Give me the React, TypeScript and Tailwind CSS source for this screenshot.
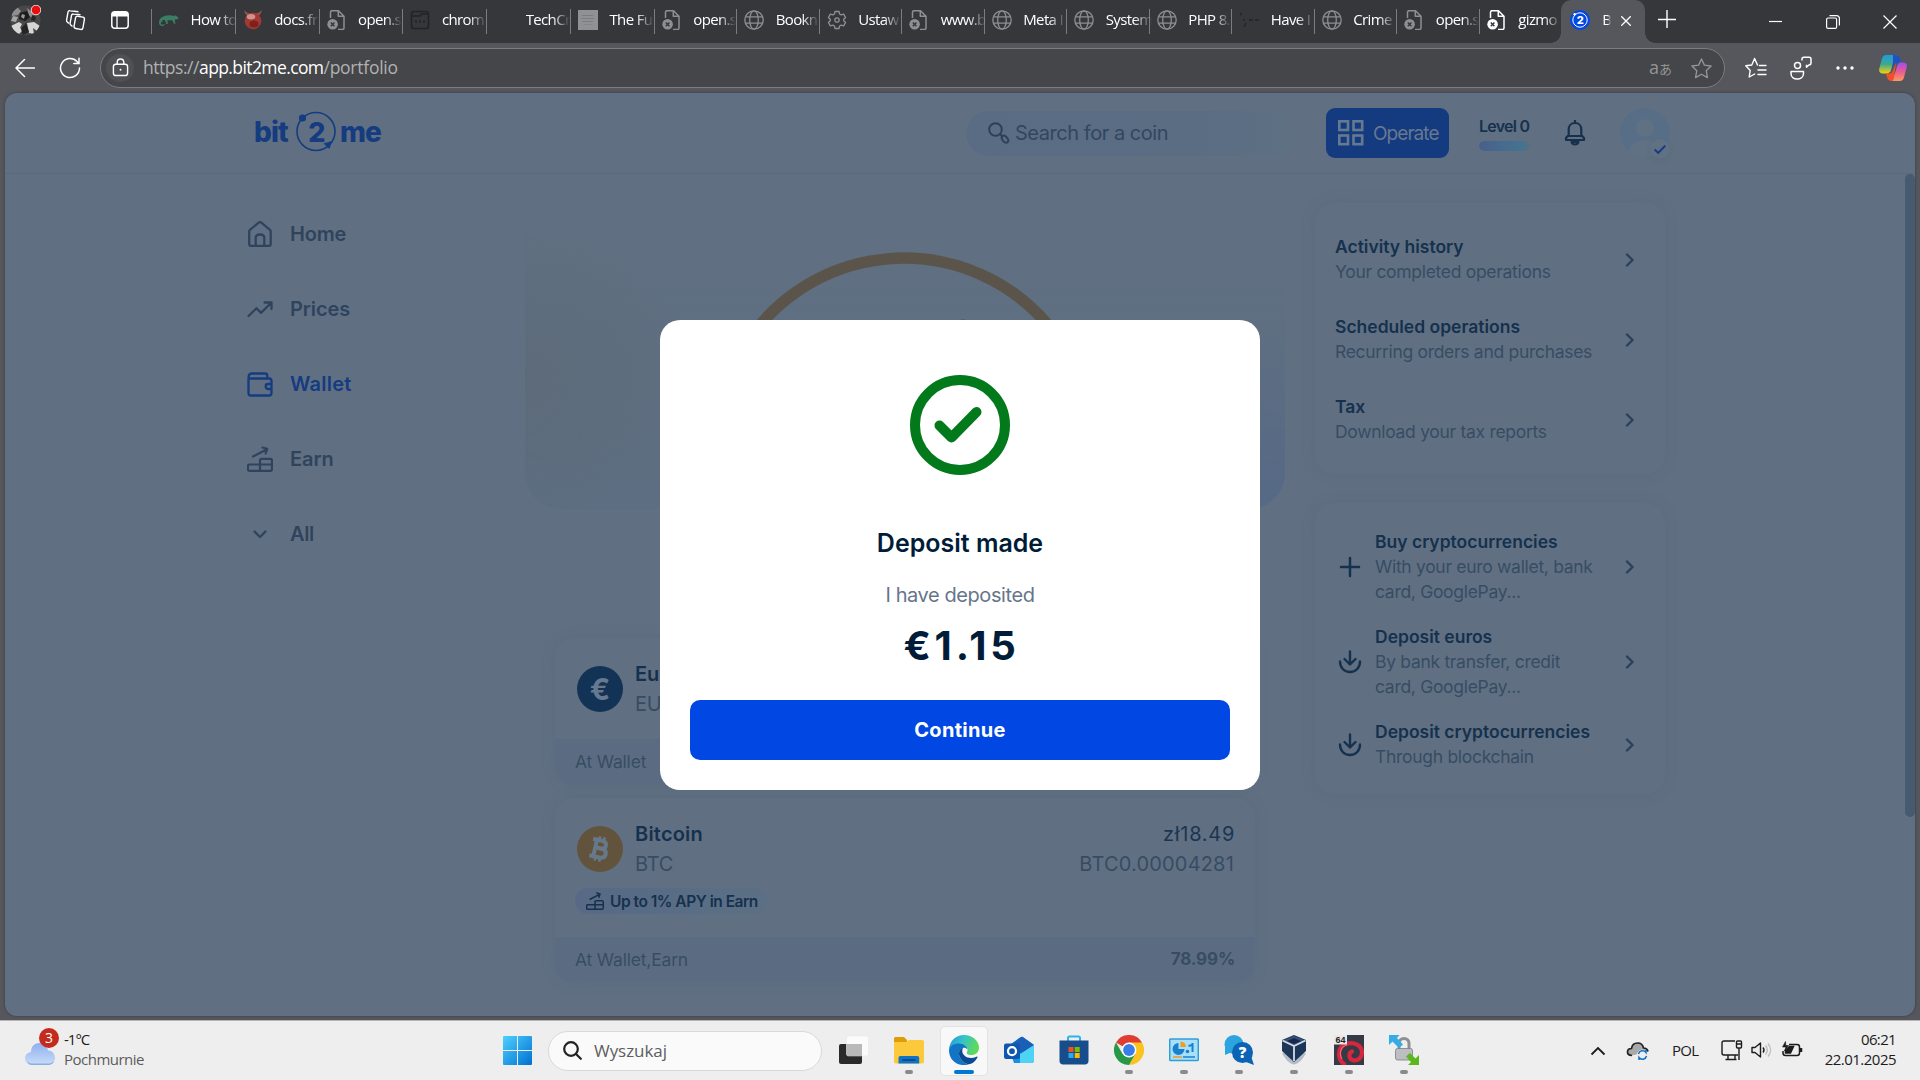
import type { ReactNode } from "react";

const INK = "#16314d";
const MUTED = "#374c63";
const BRAND = "#153b80";

/* ---------- Browser tab icons ---------- */

function DeadPage({ color = "#8e8f92" }: { color?: string }) {
  return (
    <svg viewBox="0 0 20 20" className="h-5 w-5" fill="none">
      <path d="M3.5 8V2.2c0-.9.6-1.5 1.5-1.5h6.500L17 6.200V18c0 .8-.6 1.400-1.400 1.400H11M11.300 1v5.300H17" stroke={color} strokeWidth="1.5" strokeLinejoin="round" />
      <circle cx="5.6" cy="14.3" r="5.3" fill={color} />
      <path d="m3.8 12.4 3.6 3.8m0-3.8-3.6 3.8" stroke="#36373b" strokeWidth="1.4" />
    </svg>
  );
}

function Globe() {
  return (
    <svg viewBox="0 0 20 20" className="h-5 w-5" fill="none" stroke="#8e8f92" strokeWidth="1.3">
      <circle cx="10" cy="10" r="9.2" />
      <ellipse cx="10" cy="10" rx="4.3" ry="9.2" />
      <path d="M1.6 6.8h16.8M1.6 13.2h16.8" />
    </svg>
  );
}

function Gear() {
  return (
    <svg viewBox="0 0 24 24" className="h-[22px] w-[22px]" fill="none" stroke="#8e8f92" strokeWidth="1.6" strokeLinejoin="round">
      <path d="M9.6 1.8h4.8l.7 3 1.9 1.1 3-.9 2.3 4-2.2 2.1v1.8l2.2 2.1-2.3 4-3-.9-1.9 1.1-.7 3H9.600l-.7-3L7 18.100l-3 .9-2.300-4 2.200-2.100v-1.800L1.700 9l2.300-4 3 .9 1.900-1.100z" />
      <circle cx="12" cy="12" r="2.600" />
    </svg>
  );
}

function Chameleon() {
  return (
    <svg viewBox="0 0 20 20" className="h-5 w-5" fill="none">
      <path d="M5.200 14.200a2.200 2.200 0 1 1-1.700-3.200" stroke="#3b7d62" strokeWidth="1.300" />
      <path d="M4.600 15.200C1.500 16.500-.3 14 .1 11.500.5 8.500 2.500 6.800 5 6.200 8 5.200 12 5 14.500 6c1.500-1.300 3 0 3 0l2.200 1.900c-.5 1.600-2.700 1.800-4.200 1.600l1 4-1.500.2-1.700-3.400H8.500l.3 3.600-1.600.1L6 10.200c-2-.7-4.300.3-4.300 2.500 0 1.500 1.300 2.600 2.900 2.500z" fill="#3b7d62" />
    </svg>
  );
}

function Daemon() {
  return (
    <svg viewBox="0 0 20 20" className="h-5 w-5">
      <path d="M1.500 0c0 3 1 5 4.500 6l2-2.500C5 3.500 3 2.500 1.500 0zM18.500 0c0 3-1 5-4.500 6l-2-2.500c3 0 5-1 6.500-3.500z" fill="#a0504c" />
      <circle cx="10" cy="11" r="8.300" fill="#a23a33" />
      <ellipse cx="8" cy="6.700" rx="4.300" ry="2.700" fill="#cf928d" />
      <ellipse cx="11" cy="14" rx="4.500" ry="3.500" fill="#7e211b" />
    </svg>
  );
}

function DarkWindow() {
  return (
    <svg viewBox="0 0 20 20" className="h-5 w-5" fill="none" stroke="#222327" strokeWidth="1.600">
      <rect x="1.500" y="1.500" width="17" height="17" rx="2.500" />
      <path d="M2 6h8l1.500-2H18" />
      <path d="M5 11.500h2m2 0h2m2 0h2" strokeWidth="2" />
    </svg>
  );
}

function GreySquare() {
  return (
    <div className="flex h-5 w-5 flex-col items-center justify-center gap-[2px] bg-[#909193]">
      <div className="h-px w-[11px] bg-[#7b7c7e]" />
      <div className="h-px w-[13px] bg-[#7b7c7e]" />
      <div className="h-px w-[11px] bg-[#7b7c7e]" />
      <div className="h-px w-[8px] bg-[#7b8792]" />
    </div>
  );
}

function FaintMark() {
  return (
    <svg viewBox="0 0 20 20" className="h-5 w-5" stroke="#242529" strokeWidth="1.500">
      <path d="M1 3l1.500 2M5 9v2M7 13l-2 4M10 10h4M16 10h4" />
    </svg>
  );
}

function Bit2MeMark() {
  return (
    <svg viewBox="0 0 20 20" className="h-5 w-5">
      <circle cx="10" cy="10" r="10" fill="#0147e4" />
      <circle cx="10" cy="10" r="7.200" fill="none" stroke="#fff" strokeWidth="1" />
      <circle cx="4.700" cy="4.300" r="1.300" fill="#fff" />
      <text x="10" y="14" textAnchor="middle" fontFamily="Inter" fontWeight="800" fontSize="11" fill="#fff">2</text>
    </svg>
  );
}

const tabs: { icon: ReactNode; title: string }[] = [
  { icon: <Chameleon />, title: "How to" },
  { icon: <Daemon />, title: "docs.fr" },
  { icon: <DeadPage />, title: "open.s" },
  { icon: <DarkWindow />, title: "chrom" },
  { icon: null, title: "TechCr" },
  { icon: <GreySquare />, title: "The Fu" },
  { icon: <DeadPage />, title: "open.s" },
  { icon: <Globe />, title: "Bookn" },
  { icon: <Gear />, title: "Ustaw" },
  { icon: <DeadPage />, title: "www.b" },
  { icon: <Globe />, title: "Meta I" },
  { icon: <Globe />, title: "System" },
  { icon: <Globe />, title: "PHP 8." },
  { icon: <FaintMark />, title: "Have I" },
  { icon: <Globe />, title: "Crime" },
  { icon: <DeadPage />, title: "open.s" },
  { icon: <DeadPage color="#ffffff" />, title: "gizmo" },
];

function TabStrip() {
  return (
    <div className="flex h-[43px] bg-[#36373b] text-[15px] tracking-[-0.65px] text-white">
      <div className="flex w-[151px] shrink-0 items-start pt-[5px] pl-[10px]">
        <svg viewBox="0 0 31 31" className="h-[31px] w-[31px]">
          <clipPath id="face"><circle cx="15.500" cy="15.500" r="15" /></clipPath>
          <g clipPath="url(#face)">
            <rect width="31" height="31" fill="#484848" />
            <path d="M2 6l5-4 4 4-3 4-6 1zM17 3l6 5 1 6-5-3z" fill="#8f8f8f" />
            <path d="M10 8l7-2 3 6-5 4-6-2z" fill="#1c1c1c" />
            <path d="M12 9l3 1-1 4-3-2z" fill="#9a9a9a" />
            <path d="M1 21l8-4 3 2-2 4 3 2-4 4-8-2zM17 18l7-1 6 4-3 5-4-3 1 6-5-1-1-5z" fill="#d6d6d6" />
            <path d="M11 24l5-6 3 9-6 3zM22 10l4 2-1 4-4-1z" fill="#242424" />
            <path d="M3 11l5 1-2 5-5-1z" fill="#a5a5a5" />
          </g>
          <circle cx="26" cy="5" r="4.800" fill="#e60f0f" stroke="#fff" strokeWidth=".8" />
        </svg>
        <svg viewBox="0 0 22 22" className="mt-[4px] ml-[24px] h-[22px] w-[22px]" fill="none" stroke="#fff" strokeWidth="1.400" strokeLinejoin="round">
          <rect x="9.700" y="7.500" width="9" height="12.500" rx="2" transform="rotate(10 14 14)" />
          <path d="M7.500 17.500 5.800 16c-.7-.6-.9-1-.7-1.900L6.500 6.500c.2-1 .9-1.700 2-1.500l7 .8" />
          <path d="M4 14.500 2.300 13c-.7-.6-.9-1-.7-1.900l1.400-8c.2-1 .9-1.600 2-1.400l8.500 1.100" />
        </svg>
        <svg viewBox="0 0 18 18" className="mt-[6px] ml-[24px] h-[18px] w-[18px]">
          <rect x=".8" y=".8" width="16.400" height="16.400" rx="3" fill="none" stroke="#fff" strokeWidth="1.500" />
          <path d="M1 5.500V4c0-2 1.300-3 3-3h10c1.700 0 3 1 3 3v1.500z" fill="#fff" />
          <path d="M6 5v12" stroke="#fff" strokeWidth="1.300" />
        </svg>
      </div>
      {tabs.map((t, i) => (
        <div key={i} className={i < 6 ? "flex h-[38px] w-[83.8px] shrink-0 items-center" : "flex h-[38px] w-[82.5px] shrink-0 items-center"}>
          <div className="mt-[5px] h-[25px] w-px shrink-0 bg-[#7b7c7f]" />
          <div className="mt-px ml-[7px] flex h-5 w-5 shrink-0 items-center justify-center">{t.icon}</div>
          <div className="ml-[11.5px] flex-1 whitespace-nowrap [mask-image:linear-gradient(to_right,black_60%,transparent)]">{t.title}</div>
        </div>
      ))}
      <div className="relative flex h-[43px] w-[84px] shrink-0 items-center rounded-t-[10px] bg-[#56575c] pb-[4px] pl-[9px]">
        <div className="absolute bottom-0 left-[-10px] h-[10px] w-[10px] bg-[radial-gradient(circle_at_0_0,#36373b_9.500px,#56575c_10px)]" />
        <div className="absolute right-[-10px] bottom-0 h-[10px] w-[10px] bg-[radial-gradient(circle_at_100%_0,#36373b_9.500px,#56575c_10px)]" />
        <Bit2MeMark />
        <div className="ml-[12px] w-[9px] [mask-image:linear-gradient(to_right,black_60%,transparent)]">B</div>
        <svg viewBox="0 0 10 10" className="mt-[2px] ml-[10px] h-[10px] w-[10px]" stroke="#fff" strokeWidth="1.300"><path d="M.3.3l9.400 9.400M9.700.3.3 9.700" /></svg>
      </div>
      <svg viewBox="0 0 18 18" className="mt-[10px] ml-[13px] h-[18px] w-[18px] shrink-0" stroke="#fff" strokeWidth="1.400"><path d="M9 0v18M0 9.500h18" /></svg>
      <div className="ml-[93px] flex items-start gap-[43px] pt-[15px]">
        <svg viewBox="0 0 14 14" className="h-[14px] w-[14px]" stroke="#fff" strokeWidth="1.200"><path d="M0 6.500h13" /></svg>
        <svg viewBox="0 0 14 14" className="h-[14px] w-[14px]" fill="none" stroke="#fff" strokeWidth="1.200"><rect x=".6" y="3" width="10" height="10.400" rx="1.500" /><path d="M3.500.6h6.900c1.900 0 3 1 3 3v7" /></svg>
        <svg viewBox="0 0 14 14" className="h-[14px] w-[14px]" stroke="#fff" strokeWidth="1.200"><path d="M.5.5l13 13M13.500.5l-13 13" /></svg>
      </div>
    </div>
  );
}

function Toolbar() {
  return (
    <div className="flex h-[50px] items-center bg-[#56575c]">
      <svg viewBox="0 0 20 20" className="ml-[15px] h-5 w-5" fill="none" stroke="#fff" strokeWidth="1.500" strokeLinecap="round"><path d="M9.500 1.500 1 10l8.500 8.500M1 10h18.500" /></svg>
      <svg viewBox="0 0 22 22" className="ml-[24px] h-[22px] w-[22px]" fill="none" stroke="#fff" strokeWidth="1.500" strokeLinecap="round"><path d="M20.500 11A9.500 9.500 0 1 1 18 4.600L20 6.500M20 1.300v5.200h-5.200" /></svg>
      <div className="ml-[19px] flex h-[40px] w-[1625px] items-center rounded-full border border-[#7c7d80] bg-[#454649] pr-[11px] pl-[5px]">
        <div className="flex h-[28px] w-[28px] items-center justify-center rounded-full bg-[#4f5053]">
          <svg viewBox="0 0 18 20" className="mb-[2px] h-[19px] w-[17px]" fill="none" stroke="#fff" strokeWidth="1.500"><rect x="1.500" y="6.500" width="15" height="12" rx="2.500" /><path d="M5.500 6.500V4.800C5.500 2.500 7 1 9 1s3.500 1.500 3.500 3.800v1.700" /><circle cx="9" cy="12.400" r="1" fill="#fff" stroke="none" /></svg>
        </div>
        <div className="ml-[9px] flex-1 pb-[1px] text-[17.5px] whitespace-nowrap text-[#b0b1b3]">
          <span className="tracking-[-0.46px]">https://</span>
          <span className="tracking-[-0.6px] text-white">app.bit2me.com</span>
          <span className="tracking-[-0.25px]">/portfolio</span>
        </div>
        <div className="mr-[18px] flex items-baseline pb-[2px] text-[#949598]">
          <span className="text-[18px]">a</span>
          <span className="font-['Noto_Sans_CJK_JP',sans-serif] text-[13px]">あ</span>
        </div>
        <svg viewBox="0 0 24 24" className="h-[23px] w-[23px]" fill="none" stroke="#949598" strokeWidth="1.400" strokeLinejoin="round"><path d="m12 2 3 6.500 7 .9-5.100 4.900 1.300 7.200L12 18l-6.200 3.500 1.300-7.200L2 9.400l7-.9z" /></svg>
      </div>
      <svg viewBox="0 0 22 22" className="ml-[20px] h-[22px] w-[22px]" fill="none" stroke="#fff" strokeWidth="1.400" strokeLinejoin="round" strokeLinecap="round"><path d="M12.500 8 9.600 1.500 6.800 8l-6 .8L5.200 13.500l-1 6.500 5.500-3M14.500 8.500h6.500M13 13h8M13 17.500h8" /></svg>
      <svg viewBox="0 0 22 24" className="ml-[23px] h-[24px] w-[22px]" fill="none" stroke="#fff" strokeWidth="1.500" strokeLinejoin="round"><circle cx="7.500" cy="9.500" r="3" /><path d="M1 15.500h12.500v2c0 3.500-3 5.500-6.300 5.500S1 21 1 17.500zM12 4.500V3c0-1 .7-1.800 1.800-1.800h5.400c1.100 0 1.800.8 1.800 1.800v4c0 1-.7 1.800-1.800 1.800l-2.700 2.400V8.800" /></svg>
      <svg viewBox="0 0 18 4" className="ml-[24px] h-[4px] w-[18px]" fill="#fff"><circle cx="2" cy="2" r="1.700" /><circle cx="9" cy="2" r="1.700" /><circle cx="16" cy="2" r="1.700" /></svg>
      <svg viewBox="0 0 28 26" className="ml-[25px] h-[26px] w-[28px]">
        <defs>
          <linearGradient id="cpA" x1="0" y1="0" x2="0" y2="1"><stop offset="0" stopColor="#1a9be8" /><stop offset=".5" stopColor="#3fa98c" /><stop offset="1" stopColor="#f5d20c" /></linearGradient>
          <linearGradient id="cpB" x1="0" y1="0" x2="0" y2="1"><stop offset="0" stopColor="#a04df0" /><stop offset=".5" stopColor="#ea5a94" /><stop offset="1" stopColor="#ff9a5c" /></linearGradient>
        </defs>
        <path d="M7 0h11l-1.500 1.500L11.500 16.500 9 18.500H4c-3 0-4.500-2-3.700-5L3 3.500C3.600 1.300 5 0 7 0z" fill="url(#cpA)" />
        <path d="M14 0h2c3 0 4 1 5 4l1 4h-4.500c-1.700 0-2.700 1-3.200 2.500L12 17l2-10z" fill="#1c52c8" />
        <path d="M21 26h-8l3.500-9.500L18.500 10l2-2.500H24c3 0 4.500 1.500 3.700 4.500L25 22.500c-.6 2.200-2 3.500-4 3.500z" fill="url(#cpB)" />
        <path d="M7 18.500h3.500c1.500 0 2.400-.7 3-2.200L17 8l-2.500 17-1.500 1c-3 0-4-1-5-4z" fill="#f0512c" />
      </svg>
    </div>
  );
}

/* ---------- Page ---------- */

function EarnIcon({ className }: { className: string }) {
  return (
    <svg viewBox="0 0 26 26" className={className} fill="none" stroke="currentColor" strokeWidth="2.200" strokeLinejoin="round" strokeLinecap="round">
      <path d="M6 10.500 19.500 3.500M15.500 1.500l4.700 1.300-1.500 4.700" />
      <path d="M13 18v-3.700c0-1 .5-1.500 1.500-1.500h9c1 0 1.400.5 1.400 1.500v9c0 1-.5 1.500-1.500 1.500h-21c-1 0-1.500-.5-1.500-1.500V20c0-1 .5-1.500 1.500-1.500h22.500M13 18v7" />
    </svg>
  );
}

function SiteHeader() {
  return (
    <header className="flex h-[81px] shrink-0 items-center border-b border-[#586a80] pl-[249px]">
      <div className="flex items-center pb-[2px] text-[28px] font-extrabold tracking-[-0.9px] text-[#153b80]">
        <span className="w-[40px]">bit</span>
        <svg viewBox="0 0 44 44" className="h-[44px] w-[44px] shrink-0">
          <circle cx="22" cy="21.500" r="19" fill="none" stroke={BRAND} strokeWidth="1.600" />
          <circle cx="8.500" cy="8" r="3.600" fill={BRAND} />
          <path d="M29.500 33.500l8.500-2.500-2.500 8z" fill={BRAND} />
          <text x="22.500" y="32" textAnchor="middle" fontFamily="Inter" fontWeight="800" fontSize="27" fill={BRAND}>2</text>
        </svg>
        <span className="w-[46px] pl-[2px]">me</span>
      </div>
      <div className="ml-[582px] flex h-[45px] w-[330px] shrink-0 items-center rounded-full bg-[linear-gradient(90deg,#5a6c84,#5b6d83_70%,#5e7082)] pl-[22px]">
        <svg viewBox="0 0 22 22" className="h-[22px] w-[22px]" fill="none" stroke="#2c4159" strokeWidth="2"><circle cx="7.500" cy="7.500" r="6.300" /><path d="m12 12 2 2" /><ellipse cx="17" cy="17.200" rx="4" ry="2.500" transform="rotate(50 17 17.200)" /></svg>
        <span className="ml-[5px] text-[20px] tracking-[-0.46px] text-[#31465f]">Search for a coin</span>
      </div>
      <div className="ml-[30px] flex h-[50px] w-[123px] shrink-0 items-center rounded-[9px] bg-[#143a7f] pl-[12px]">
        <svg viewBox="0 0 26 26" className="h-[26px] w-[26px]" fill="none" stroke="#66798f" strokeWidth="2.600"><rect x="1.300" y="1.300" width="8.700" height="8.700" /><rect x="15.500" y="1.300" width="8.700" height="8.700" /><rect x="1.300" y="15.500" width="8.700" height="8.700" /><rect x="15.500" y="15.500" width="8.700" height="8.700" /></svg>
        <span className="mt-[2px] ml-[9px] text-[19px] tracking-[-0.95px] text-[#667890]">Operate</span>
      </div>
      <div className="ml-[30px] flex w-[56px] shrink-0 flex-col">
        <span className="text-[16px] leading-5 font-semibold tracking-[-0.75px] whitespace-nowrap text-[#16314d]">Level 0</span>
        <div className="mt-[5px] h-[10px] w-[51px] overflow-hidden rounded-full bg-[#567083]">
          <div className="h-full w-[47px] rounded-full bg-[linear-gradient(90deg,#48608c,#447590)]" />
        </div>
      </div>
      <svg viewBox="0 0 22 26" className="ml-[29px] h-[26px] w-[22px] shrink-0" fill="none" stroke={INK} strokeWidth="2.200" strokeLinejoin="round"><path d="M11 0v3M11 3c-4 0-6.300 3-6.300 6.500v5.500L2 18v2h18v-2l-2.700-3V9.500C17.300 6 15 3 11 3zM4.500 16h13M7.500 22c.5 1.600 1.800 2.500 3.500 2.500s3-.9 3.500-2.500z" /></svg>
      <div className="relative ml-[34px] h-[50px] w-[50px] shrink-0">
        <svg viewBox="0 0 50 50" className="h-[50px] w-[50px]">
          <clipPath id="user"><circle cx="25" cy="25" r="25" /></clipPath>
          <g clipPath="url(#user)"><rect width="50" height="50" fill="#586e86" /><circle cx="25" cy="20" r="9" fill="#607184" /><ellipse cx="25" cy="48" rx="18" ry="16" fill="#607184" /></g>
        </svg>
        <div className="absolute top-[31px] left-[30px] flex h-5 w-5 items-center justify-center rounded-full bg-[#607184] shadow-[0_2px_4px_rgba(70,90,115,0.25)]">
          <svg viewBox="0 0 12 9" className="h-[9px] w-[12px]" fill="none" stroke={BRAND} strokeWidth="1.900"><path d="m.7 4.500 3.500 3.500L11.300.7" /></svg>
        </div>
      </div>
    </header>
  );
}

const nav: { label: string; cls: string; icon: ReactNode }[] = [
  { label: "Home", cls: "tracking-[-0.2px] text-[#2f445c]", icon: <path d="M2.200 10.500c0-.6.200-1.200.7-1.600L12 1.400c.6-.5 1.400-.5 2 0l9 7.500c.5.400.7 1 .7 1.600v12.600c0 1.200-.7 1.900-1.900 1.900H4.100c-1.200 0-1.900-.7-1.900-1.900zM8.700 25v-8c0-2.300 1.700-3.500 4.300-3.500s4.300 1.200 4.300 3.500v8" /> },
  { label: "Prices", cls: "tracking-[-0.1px] text-[#2f445c]", icon: <path d="m1.500 20 8-7.800 4.500 4.700L24 7M17.500 6.500H24.500V13" /> },
  { label: "Wallet", cls: "tracking-[0.25px] text-[#153b80]", icon: <path d="M1.500 7.500V22c0 1.600.8 2.500 2.500 2.500h18c1.700 0 2.500-.9 2.500-2.500V10c0-1.600-.8-2.500-2.500-2.500zc0-3.500 1-5 3-5h13.500c1.500 0 2.300.8 2.300 2.300v2.500M24.500 13h-3.300c-1.500 0-2.500 1-2.500 2.300s1 2.700 2.500 2.700h3.300" /> },
  { label: "Earn", cls: "tracking-[-0.1px] text-[#2f445c]", icon: null },
  { label: "All", cls: "tracking-[-0.4px] text-[#2f445c]", icon: <path d="m7.500 10.500 5.500 5.500 5.500-5.500" /> },
];

function Sidebar() {
  return (
    <nav className="flex w-[520px] shrink-0 flex-col pt-[22px] pl-[242px]">
      {nav.map((n) => (
        <div key={n.label} className={`flex h-[75px] items-center gap-[17px] text-[20px] font-semibold ${n.cls}`}>
          {n.icon ? (
            <svg viewBox="0 0 26 26" className="h-[26px] w-[26px]" fill="none" stroke="currentColor" strokeWidth="2.300" strokeLinecap="round" strokeLinejoin="round">{n.icon}</svg>
          ) : (
            <EarnIcon className="h-[26px] w-[26px]" />
          )}
          {n.label}
        </div>
      ))}
    </nav>
  );
}

function Portfolio() {
  return (
    <main className="w-[760px] shrink-0">
      <div className="mt-[26px] flex h-[309px] justify-center rounded-b-[36px] bg-[radial-gradient(ellipse_180px_150px_at_0%_58%,#5d6b79,transparent),radial-gradient(ellipse_280px_190px_at_100%_100%,#566985,transparent),linear-gradient(180deg,transparent_20%,#5d6e82_100%)] pt-[48px]">
        <svg viewBox="703 246 404 90" className="h-[90px] w-[404px]" fill="none">
          <path d="M741 350A188.500 188.500 0 0 1 1048 323" stroke="#5b544b" strokeWidth="11.500" strokeLinecap="round" />
          <ellipse cx="963" cy="320" rx="4" ry="2.500" fill="#4c4f68" />
        </svg>
      </div>
      <div className="mx-[30px] mt-[129px] flex flex-col gap-[13px]">
        <section className="overflow-hidden rounded-[20px] shadow-[0_0_14px_rgba(70,90,115,0.18)]">
          <div className="flex h-[101px] items-start pt-[21px] pl-[22px]">
            <div className="mt-[7px] flex h-[46px] w-[46px] items-center justify-center rounded-full bg-[#123355] text-[30px] leading-none font-bold text-[#66798e]">€</div>
            <div className="ml-[12px] text-[20px] leading-[30px]">
              <div className="font-semibold text-[#16314d]">Euro</div>
              <div className="tracking-[-0.29px] text-[#374c63]">EUR</div>
            </div>
          </div>
          <div className="flex h-[46px] items-center bg-[#5b6c82] px-[20px] text-[17.5px] tracking-[-0.2px] text-[#374c63]">At Wallet</div>
        </section>
        <section className="overflow-hidden rounded-[20px] shadow-[0_0_14px_rgba(70,90,115,0.18)]">
          <div className="flex h-[139px] flex-col pt-[21px]">
            <div className="flex items-start pr-[20px] pl-[22px]">
              <svg viewBox="0 0 46 46" className="mt-[7px] h-[46px] w-[46px]">
                <circle cx="23" cy="23" r="23" fill="#62543c" />
                <g transform="rotate(13 23 23)" stroke="#66788a" fill="none" strokeWidth="4">
                  <path d="M14 14.500h9c3.500 0 5 1.600 5 4 0 2.500-1.700 4-5 4h-5M14 31.500h10c4 0 5.700-1.700 5.700-4.600 0-3-2-4.700-5.700-4.700h-5.500M18 14.500v17" />
                  <path d="M20.300 10.500v4M25 10.500v4M20.300 31.500v4M25 31.500v4" strokeWidth="2.600" />
                </g>
              </svg>
              <div className="ml-[12px] text-[20px] leading-[30px]">
                <div className="font-semibold tracking-[0.2px] text-[#16314d]">Bitcoin</div>
                <div className="tracking-[-0.29px] text-[#374c63]">BTC</div>
              </div>
              <div className="ml-auto text-right text-[20px] leading-[30px]">
                <div className="tracking-[0.7px] text-[#1b3651]">zł18.49</div>
                <div className="pr-px tracking-[0.18px] text-[#374c63]">BTC0.00004281</div>
              </div>
            </div>
            <div className="mt-[9px] ml-[20px] flex h-[26px] w-[193px] items-center rounded-full bg-[linear-gradient(90deg,#576986,#5b7084)] pl-[11px] text-[#16314d]">
              <EarnIcon className="h-[18px] w-[18px]" />
              <span className="mt-px ml-[6px] text-[15.5px] font-semibold tracking-[-0.48px] whitespace-nowrap">Up to 1% APY in Earn</span>
            </div>
          </div>
          <div className="flex h-[46px] items-center justify-between bg-[#5b6c82] px-[20px] text-[17.5px] tracking-[-0.18px] text-[#374c63]">
            <span>At Wallet,Earn</span>
            <span className="text-[17px] font-bold tracking-[-0.15px]">78.99%</span>
          </div>
        </section>
      </div>
    </main>
  );
}

function Chevron() {
  return (
    <svg viewBox="0 0 10 14" className="mt-px h-[14px] w-[10px] shrink-0" fill="none" stroke="#2c4159" strokeWidth="2.400" strokeLinecap="round" strokeLinejoin="round"><path d="m2 1.500 5.500 5.500L2 12.500" /></svg>
  );
}

function Row({ icon, title, lines }: { icon?: ReactNode; title: string; lines: string[] }) {
  return (
    <div className="flex items-center">
      {icon}
      <div className="flex-1 text-[17.5px] leading-[25px] whitespace-nowrap">
        <div className="font-semibold text-[#16314d]">{title}</div>
        {lines.map((l) => (
          <div key={l} className="tracking-[-0.3px]" style={{ color: MUTED }}>{l}</div>
        ))}
      </div>
      <Chevron />
    </div>
  );
}

function PlusIcon() {
  return <svg viewBox="0 0 30 30" className="mt-px mr-[10px] h-[30px] w-[30px]" stroke={INK} strokeWidth="2.500" strokeLinecap="round"><path d="M15 6v18M6 15h18" /></svg>;
}

function DepositIcon() {
  return <svg viewBox="0 0 30 30" className="mt-px mr-[10px] h-[30px] w-[30px]" fill="none" stroke={INK} strokeWidth="2.400" strokeLinecap="round" strokeLinejoin="round"><path d="M15 4.500V17M9.500 12l5.500 5.500 5.500-5.500M5 14.500c0 6 4 10.500 10 10.500s10-4.500 10-10.500" /></svg>;
}

function Shortcuts() {
  return (
    <aside className="ml-[30px] flex w-[350px] shrink-0 flex-col gap-[29px] pt-[29px]">
      <div className="flex flex-col gap-[30px] rounded-[20px] pt-[31px] pr-[30px] pb-[30px] pl-[20px] shadow-[0_0_14px_rgba(70,90,115,0.18)]">
        <Row title="Activity history" lines={["Your completed operations"]} />
        <Row title="Scheduled operations" lines={["Recurring orders and purchases"]} />
        <Row title="Tax" lines={["Download your tax reports"]} />
      </div>
      <div className="flex flex-col gap-[20px] rounded-[20px] pt-[26px] pr-[30px] pb-[25px] pl-[20px] shadow-[0_0_14px_rgba(70,90,115,0.18)]">
        <Row icon={<PlusIcon />} title="Buy cryptocurrencies" lines={["With your euro wallet, bank", "card, GooglePay..."]} />
        <Row icon={<DepositIcon />} title="Deposit euros" lines={["By bank transfer, credit", "card, GooglePay..."]} />
        <Row icon={<DepositIcon />} title="Deposit cryptocurrencies" lines={["Through blockchain"]} />
      </div>
    </aside>
  );
}

function DepositDialog() {
  return (
    <div role="dialog" className="absolute top-[227px] left-[655px] flex h-[470px] w-[600px] flex-col items-center rounded-[20px] bg-white px-[30px] pt-[55px]">
      <svg viewBox="0 0 100 100" className="h-[100px] w-[100px] shrink-0" fill="none" stroke="#027a1c" strokeWidth="10" strokeLinecap="round" strokeLinejoin="round">
        <circle cx="50" cy="50" r="45" />
        <path d="m29.500 50.500 12 12L66.500 37" />
      </svg>
      <h1 className="mt-[50px] text-[25px] leading-[36px] font-semibold text-[#001c38]">Deposit made</h1>
      <p className="mt-[19px] text-[20px] leading-[30px] tracking-[-0.42px] text-[#66758a]">I have deposited</p>
      <p className="mt-[11px] pl-[3px] text-[40px] leading-[50px] font-bold tracking-[3.800px] text-[#001c38]">€1.15</p>
      <button className="mt-[29px] h-[60px] w-[540px] shrink-0 rounded-[10px] bg-[#0147e4] text-[20px] font-bold tracking-[0.3px] text-white">Continue</button>
    </div>
  );
}

/* ---------- Taskbar ---------- */

const apps: { icon: ReactNode; running?: boolean; active?: boolean }[] = [
  {
    icon: (
      <svg viewBox="0 0 30 30" className="h-[30px] w-[30px]">
        <rect x="0" y="9" width="23" height="20" rx="2" fill="#2a2a2a" />
        <rect x="7.500" y="1" width="22" height="20" rx="2" fill="#fbfbfb" stroke="#e4e4e4" strokeWidth=".5" />
        <path d="M7.500 9H23v12H9.500a2 2 0 0 1-2-2z" fill="#b9b9b9" />
      </svg>
    ),
  },
  {
    running: true,
    icon: (
      <svg viewBox="0 0 30 30" className="h-[30px] w-[30px]">
        <path d="M0 4c0-1.500.7-2 2-2h8l3 3v8H0z" fill="#dd9e05" />
        <path d="M0 7h12l3-2h13c1.300 0 2 .7 2 2v19.500c0 1.300-.7 2-2 2H2c-1.300 0-2-.7-2-2z" fill="#fcc93c" />
        <path d="M4.500 28.500V23c0-1.300.7-2 2-2h16.700c1.300 0 2 .7 2 2v5.500z" fill="#1173c7" /><path d="M8.500 25h13" stroke="#0b3f78" strokeWidth="1.500" />
      </svg>
    ),
  },
  {
    running: true,
    active: true,
    icon: (
      <svg viewBox="0 0 30 30" className="h-[30px] w-[30px]">
        <defs><linearGradient id="edT" x1="0" y1="0" x2="1" y2=".3"><stop offset="0" stopColor="#2495dd" /><stop offset=".5" stopColor="#35c3c8" /><stop offset="1" stopColor="#5fd95b" /></linearGradient></defs>
        <circle cx="15" cy="15" r="15" fill="#f8f8f8" />
        <path d="M0 14C1 5.500 7 0 15 0c8.500 0 15 6 15 12.500 0 5-3.500 7.500-7.500 7.500-4 0-5.500-1.500-4.500-3 2-3.500-1-7.500-6-7.500C6.500 9.500 2 11 0 14z" fill="url(#edT)" />
        <path d="M0 15c.5-4 5-6.500 10-6.500 4.500 0 8.500 3 8.500 6-1.500-1.500-3-2-4.500-1.500-3.500 1-5 5-3 9.500 1.500 3.500 5 6.500 9 6.800C9 32.500 0 25.500 0 15z" fill="#1274c4" />
        <path d="M11 22.500c-2.500-5 0-9 3-9.500-1.500 3-.5 6 2 8 3 2.500 7.500 2.500 11.500.7.700-.3 1.300.3.800 1C26.500 26 24 28.500 20 29.300c-4-.3-7.500-3.300-9-6.800z" fill="#0c4a92" />
      </svg>
    ),
  },
  {
    icon: (
      <svg viewBox="0 0 30 30" className="h-[30px] w-[30px]">
        <path d="M4 11 16 2.500c1.200-.8 2-.8 3 0L30 10v15c0 2-1 3-3 3H10z" fill="#1690e0" />
        <path d="M9 8l8-6c.7-.4 1.300-.4 2 0L30 10 18 20z" fill="#1b5fb8" /><path d="M16 19l14-9v15c0 2-1 3-3 3H16z" fill="#4cd3f5" />
        <rect x="0" y="8.500" width="16" height="15.500" rx="2" fill="#0f56b0" /><circle cx="8" cy="16.200" r="4" fill="none" stroke="#fff" strokeWidth="2.200" />
      </svg>
    ),
  },
  {
    icon: (
      <svg viewBox="0 0 30 30" className="h-[30px] w-[30px]">
        <path d="M9 6V3c0-1 .5-1.500 1.500-1.500h9c1 0 1.500.5 1.500 1.500v3" fill="none" stroke="#2bb5ec" strokeWidth="2" />
        <path d="M.5 5.500h29V26c0 2-1.500 3.500-3.500 3.500H4C2 29.500.5 28 .5 26z" fill="#164d8a" />
        <path d="M9.500 12h5v5h-5z" fill="#f25022" /><path d="M15.700 12h5v5h-5z" fill="#7fba00" /><path d="M9.500 18h5v5h-5z" fill="#29a9ee" /><path d="M15.700 18h5v5h-5z" fill="#ffb900" />
      </svg>
    ),
  },
  {
    running: true,
    icon: (
      <svg viewBox="0 0 30 30" className="h-[30px] w-[30px]">
        <path d="M15 15 2 7.500A15 15 0 0 1 28 7.500z" fill="#e03c31" />
        <path d="M15 7.500h13A15 15 0 0 1 15 30l6.500-11.200z" fill="#fcc31e" /><path d="M8.500 18.700 2 7.500A15 15 0 0 0 15 30l6.500-11.200z" fill="#279847" />
        <circle cx="15" cy="15" r="7.400" fill="#fff" /><circle cx="15" cy="15" r="5.900" fill="#3b7de8" />
      </svg>
    ),
  },
  {
    running: true,
    icon: (
      <svg viewBox="0 0 30 30" className="h-[30px] w-[30px]">
        <rect x=".7" y="4" width="28.600" height="21.500" rx="1" fill="#a8e0fa" stroke="#2f9ed6" strokeWidth="1.500" />
        <path d="M9.500 8v6H15.500A6 6 0 1 1 9.500 8z" fill="#1b7fd0" /><path d="M11.500 6.500A6 6 0 0 1 17 12h-5.500z" fill="#f59a1b" />
        <circle cx="18.500" cy="16.500" r="1.800" fill="#1b7fd0" /><path d="M23.500 8v9M19.500 11l5-1.500" stroke="#1b7fd0" strokeWidth="2" /><path d="M4 22h9" stroke="#f59a1b" strokeWidth="1.500" /><path d="M14 22h12" stroke="#1b7fd0" strokeWidth="1.500" />
      </svg>
    ),
  },
  {
    running: true,
    icon: (
      <svg viewBox="0 0 30 30" className="h-[30px] w-[30px]">
        <circle cx="10" cy="9.500" r="9.500" fill="#2ba4e0" /><path d="M1 12v8l7-3z" fill="#2ba4e0" />
        <circle cx="18.500" cy="17.500" r="10.500" fill="#0b63b5" /><path d="M22 27l8 3-3-9z" fill="#0b63b5" />
        <text x="18.500" y="23" textAnchor="middle" fontFamily="Open Sans" fontWeight="800" fontSize="15" fill="#fff">?</text>
      </svg>
    ),
  },
  {
    running: true,
    icon: (
      <svg viewBox="0 0 30 30" className="h-[30px] w-[30px]">
        <path d="M3 18c3 6 7 10.500 12 11.500 5-1 9-5.500 12-11.500z" fill="#b6bdc9" />
        <path d="M15 0 27 5v11l-12 11L3 16V5z" fill="#1d3557" /><path d="M15 1l11 4.500-11 5-11-5z" fill="#35527c" />
        <path d="M3.500 5.500 15 11l11.500-5.500M15 11v15" fill="none" stroke="#d5dbe6" strokeWidth="1.800" /><path d="M8 6l7 3 7-3-7-3z" fill="#16294a" />
      </svg>
    ),
  },
  {
    running: true,
    icon: (
      <svg viewBox="0 0 30 30" className="h-[30px] w-[30px]">
        <rect width="30" height="30" fill="#353a44" />
        <path d="M10 29C3 24 3 12 12 9c8-2.500 16 1.500 16 8.500 0 6-5 9-9.500 7.500-4-1.500-4-7-.5-8.500" fill="none" stroke="#d5273f" strokeWidth="4.200" strokeLinecap="round" />
        <path d="M8 24C4.500 18 7 11 13 10" fill="none" stroke="#f0687a" strokeWidth="1.200" />
        <rect width="13" height="9.500" fill="#e8e8e8" /><text x="6.500" y="8" textAnchor="middle" fontFamily="Liberation Sans" fontWeight="700" fontSize="9" fill="#222">64</text>
      </svg>
    ),
  },
  {
    running: true,
    icon: (
      <svg viewBox="0 0 30 30" className="h-[30px] w-[30px]">
        <path d="M10 15V8.500C10 5.500 12 3.500 15 3.500s5 2 5 5V15" fill="none" stroke="#8d8f92" strokeWidth="3" />
        <path d="M0 0h10.500L8 3l6 6.500-4 3.500L3.500 6.500 0 10z" fill="#35ace6" />
        <rect x="6.500" y="13.500" width="17" height="11.500" rx="2" fill="#bcbec1" stroke="#7c7e82" strokeWidth=".8" />
        <path d="M30 30H19l3-3-5-5.500 4-3.500 5.500 5.500L30 20z" fill="#58b81c" />
      </svg>
    ),
  },
];

function Taskbar() {
  return (
    <footer className="flex h-[60px] items-center border-t border-[#b4b4b6] bg-[#eeeeee] text-[15px] text-[#1c1c1c]">
      <div className="flex w-[494px] items-center pl-[25px]">
        <div className="relative h-[40px] w-[30px]">
          <svg viewBox="0 0 30 24" className="mt-[11px] h-[24px] w-[30px]">
            <defs><linearGradient id="cl" x1="0" y1="0" x2="0" y2="1"><stop offset="0" stopColor="#8fb0ef" /><stop offset="1" stopColor="#c9ddf8" /></linearGradient></defs>
            <path d="M7 23a6.500 6.500 0 0 1-1-13C6 4 10 1 14.500 1c5 0 8 3 8.500 7.500 4 0 7 3.200 7 7.200S27 23 23 23z" fill="url(#cl)" /><path d="M2 19c1 3 3 4 5 4h16c3 0 5-1.200 6.300-3.800C27 21 25 21.500 23 21.500H7c-2 0-3.500-.8-5-2.500z" fill="#8aaee8" />
          </svg>
          <div className="absolute top-[-3px] left-[14px] flex h-5 w-5 items-center justify-center rounded-full bg-[#c42b1c] text-[14px] text-white">3</div>
        </div>
        <div className="mb-[4px] ml-[9px] leading-5">
          <div className="tracking-[-1px]">-1°C</div>
          <div className="tracking-[-0.51px] text-[#5c5c5c]">Pochmurnie</div>
        </div>
      </div>
      <div className="flex w-[46px] justify-center">
        <svg viewBox="0 0 29 29" className="h-[29px] w-[29px]">
          <defs><linearGradient id="win" x1="0" y1="0" x2="1" y2="1"><stop offset="0" stopColor="#4fd0ff" /><stop offset="1" stopColor="#0070d0" /></linearGradient></defs>
          <path d="M1 0h13v14H0V1a1 1 0 0 1 1-1zM15 0h13a1 1 0 0 1 1 1v13H15zM0 15h14v14H1a1 1 0 0 1-1-1zM15 15h14v13a1 1 0 0 1-1 1H15z" fill="url(#win)" />
        </svg>
      </div>
      <div className="ml-[8px] flex h-[40px] w-[274px] shrink-0 items-center rounded-full border border-[#d9d9d9] bg-[#fafafa] pl-[14px]">
        <svg viewBox="0 0 19 19" className="h-[19px] w-[19px]" fill="none" stroke="#222" strokeWidth="2.200" strokeLinecap="round"><circle cx="8" cy="8" r="6.800" /><path d="m13 13 4.800 4.800" /></svg>
        <span className="ml-[12px] text-[17px] tracking-[-0.05px] text-[#5e5e5e]">Wyszukaj</span>
      </div>
      <div className="ml-[4px] flex">
        {apps.map((a, i) => (
          <div key={i} className="flex w-[55px] shrink-0 justify-center">
            <div className={a.active ? "flex h-[50px] w-[48px] flex-col items-center rounded-[5px] border border-[#e3e3e3] bg-[#f8f8f8] pt-[8px]" : "flex h-[50px] w-[48px] flex-col items-center pt-[9px]"}>
              {a.icon}
              {a.active ? (
                <div className="mt-[5px] h-[4px] w-[20px] rounded-full bg-[#0078d4]" />
              ) : a.running ? (
                <div className="mt-[5px] h-[4px] w-[8px] rounded-full bg-[#8a8a8a]" />
              ) : null}
            </div>
          </div>
        ))}
      </div>
      <svg viewBox="0 0 16 10" className="ml-[159px] h-[10px] w-[16px]" fill="none" stroke="#1c1c1c" strokeWidth="1.800"><path d="m1.500 8.500 6.500-6.500 6.500 6.500" /></svg>
      <svg viewBox="0 0 24 20" className="ml-[20px] h-[20px] w-[24px]" fill="none">
        <path d="M6 14.500C3 14.500 1.500 13 1.500 11S3 7.500 5.500 7.500C6 4 8.500 2 11.500 2c3.200 0 5.500 2 6 5 2.500 0 4 1.500 4.500 3.500" stroke="#222" strokeWidth="1.700" fill="#a9a9a9" />
        <circle cx="16.500" cy="14" r="5.500" fill="#eee" /><path d="M12.500 13a4.200 4.200 0 0 1 7.500-1.500V9M20.500 15a4.200 4.200 0 0 1-7.500 1.500V19" stroke="#1170c8" strokeWidth="1.500" />
      </svg>
      <span className="ml-[22px] w-[49px] tracking-[-0.7px]">POL</span>
      <svg viewBox="0 0 22 22" className="mb-[2px] h-[22px] w-[22px]" fill="none" stroke="#1c1c1c" strokeWidth="1.400"><path d="M14 2H3C1.700 2 1 2.700 1 4v10c0 1.300.7 2 2 2h14M7 16v4M14 16v4M4.500 20.500h11" /><rect x="15.500" y="2" width="5" height="7" rx="1" /><path d="M15.500 5h5M18 9v12" /></svg>
      <svg viewBox="0 0 22 22" className="mb-[2px] ml-[8px] h-[22px] w-[22px]" fill="none" strokeWidth="1.400" strokeLinejoin="round"><path d="M1 8.500h3L9.500 4v14L4 13.500H1zM12 8.500c1.200 1.500 1.200 3.500 0 5" stroke="#1c1c1c" /><path d="M14.500 6.500c2.200 2.700 2.200 6.300 0 9M17 4.500c3.300 3.900 3.300 9.100 0 13" stroke="#bdbdbd" /></svg>
      <svg viewBox="0 0 22 18" className="mb-[2px] ml-[8px] h-[18px] w-[22px]" fill="none" stroke="#1c1c1c" strokeWidth="1.500"><path d="M8 3.500h8c1.500 0 2.500 1 2.500 2.500v6c0 1.500-1 2.500-2.500 2.500H4.500C3 14.500 2 13.500 2 12v-2" /><path d="M4.500 12V9l4-3.500h4L9.500 12z" fill="#1c1c1c" /><path d="M4.500.5 1.500 6H5l-1.500 4 4-5.500H4.800z" fill="#1c1c1c" strokeWidth=".6" /><path d="M20 7v4" strokeWidth="2.500" /></svg>
      <div className="mr-[24px] mb-[4px] ml-auto text-right leading-5">
        <div className="tracking-[-0.65px]">06:21</div>
        <div className="tracking-[-0.52px]">22.01.2025</div>
      </div>
    </footer>
  );
}

export default function App() {
  return (
    <div className="flex h-[1080px] w-[1920px] flex-col overflow-hidden bg-[#56575c] font-['Open_Sans',sans-serif]">
      <TabStrip />
      <Toolbar />
      <div className="relative mx-[5px] mb-[4px] flex h-[923px] shrink-0 flex-col overflow-hidden rounded-[12px] bg-[#607082] font-['Inter',sans-serif] shadow-[0_0_2px_1px_#48494e]">
        <SiteHeader />
        <div className="flex flex-1 overflow-hidden">
          <Sidebar />
          <Portfolio />
          <Shortcuts />
          <div className="ml-auto h-[643px] w-[10px] shrink-0 rounded-full bg-[#465a70]" />
        </div>
        <DepositDialog />
      </div>
      <Taskbar />
    </div>
  );
}
